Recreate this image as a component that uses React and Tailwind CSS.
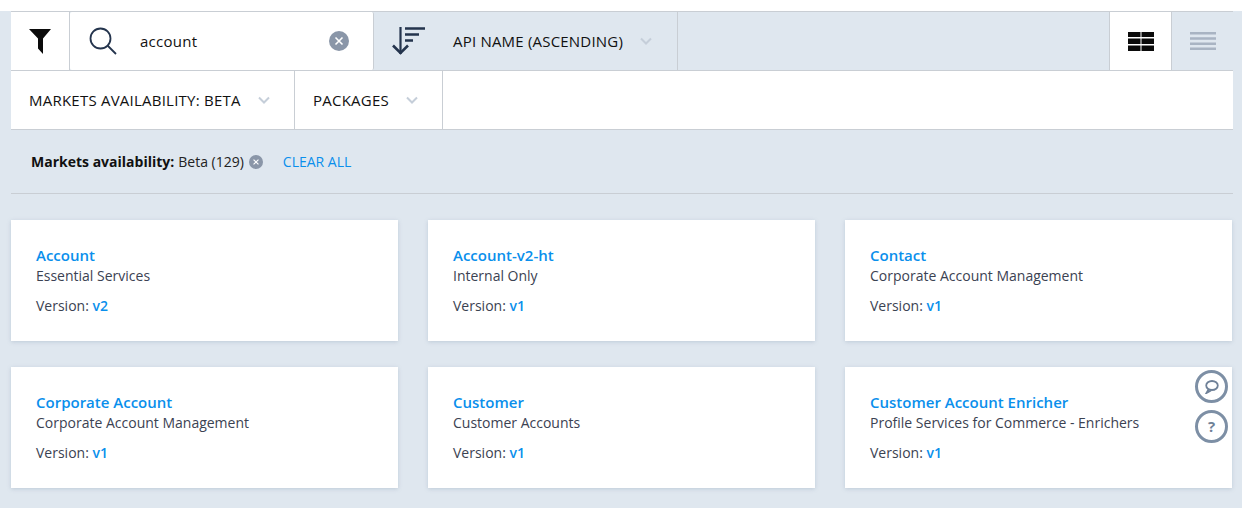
import React from "react";

const cards = [
  { name: "Account", group: "Essential Services", version: "v2" },
  { name: "Account-v2-ht", group: "Internal Only", version: "v1" },
  { name: "Contact", group: "Corporate Account Management", version: "v1" },
  { name: "Corporate Account", group: "Corporate Account Management", version: "v1" },
  { name: "Customer", group: "Customer Accounts", version: "v1" },
  { name: "Customer Account Enricher", group: "Profile Services for Commerce - Enrichers", version: "v1" },
];

const Chevron = () => (
  <svg width="12" height="8" viewBox="0 0 12 8" fill="none" stroke="#c5ced9" strokeWidth="2">
    <path d="M1 1.5l5 5 5-5" />
  </svg>
);

const ClearIcon = ({ size }) => (
  <svg width={size} height={size} viewBox="0 0 20 20">
    <circle cx="10" cy="10" r="10" fill="#8a96a8" />
    <path d="M6.5 6.5l7 7M13.5 6.5l-7 7" stroke="#fff" strokeWidth="1.6" />
  </svg>
);

const App = () => {
  return (
    <div className="relative h-[508px] overflow-hidden bg-[#dfe7ef] font-['Open_Sans',sans-serif] text-[14px] text-[#111]">
      <div className="h-[11px] bg-white" />

      <div className="mx-[11px] w-[1222px]">
        {/* Top toolbar */}
        <div className="flex h-[60px] border-y border-[#c9ced4]">
          <div className="flex w-[59px] items-center justify-center border-r border-[#c9ced4] bg-white">
            <svg width="22" height="25" viewBox="0 0 22 25">
              <path d="M0 0h22l-8 9.5V25l-5-5.5V9.5z" fill="#0b0b0b" />
            </svg>
          </div>
          <div className="flex w-[304px] items-center rounded-[2px] border-r border-[#c9ced4] bg-white">
            <svg className="ml-[19px]" width="28" height="28" viewBox="0 0 28 28" fill="none" stroke="#24344d" strokeWidth="1.8">
              <circle cx="11.5" cy="11.5" r="10" />
              <path d="M18.5 18.5l8.5 8.5" />
            </svg>
            <span className="ml-[23px] flex-1 text-[15px] font-medium tracking-[0.25px]">account</span>
            <span className="mr-[24px] flex">
              <ClearIcon size={20} />
            </span>
          </div>
          <div className="flex w-[304px] items-center border-r border-[#c9ced4]">
            <svg className="ml-[18px]" width="34" height="30" viewBox="0 0 34 30" fill="none" stroke="#24344d">
              <path d="M8.500 1v27" strokeWidth="2.200" />
              <path d="M1 19.500l7.500 7.500 7.500-7.500" strokeWidth="2.600" />
              <path d="M13 2.500h20M13 8.500h14M13 14.500h8" strokeWidth="2.600" />
            </svg>
            <span className="ml-[27px] text-[15px] font-medium tracking-[0.2px]">API NAME (ASCENDING)</span>
            <span className="ml-[17px] flex">
              <Chevron />
            </span>
          </div>
          <div className="flex-1" />
          <div className="flex w-[63px] items-center justify-center border-x border-[#c9ced4] bg-white">
            <svg width="26" height="19" viewBox="0 0 26 19" fill="#0b0b0b">
              <path d="M0 0h12.500v5H0zM13.500 0H26v5H13.500zM0 6.500h12.500v5.500H0zM13.500 6.500H26v5.500H13.500zM0 13.500h12.500V19H0zM13.500 13.500H26V19H13.500z" />
            </svg>
          </div>
          <div className="flex w-[61px] items-center justify-center">
            <svg width="26" height="19" viewBox="0 0 26 19" fill="#a9b4c3">
              <path d="M0 0h26v2.500H0zM0 5.200h26v2.500H0zM0 10.400h26v2.500H0zM0 15.600h26v2.500H0z" />
            </svg>
          </div>
        </div>

        {/* Filter dropdowns */}
        <div className="flex h-[59px] border-b border-[#c9ced4] bg-white text-[15px] font-medium tracking-[0.23px]">
          <div className="flex w-[284px] items-center border-r border-[#c9ced4] pl-[18px]">
            <span>MARKETS AVAILABILITY: BETA</span>
            <span className="ml-[17px] flex">
              <Chevron />
            </span>
          </div>
          <div className="flex w-[148px] items-center border-r border-[#c9ced4] pl-[18px]">
            <span>PACKAGES</span>
            <span className="ml-[17px] flex">
              <Chevron />
            </span>
          </div>
        </div>

        {/* Active filters */}
        <div className="flex h-[64px] items-center border-b border-[#c9ced4] pl-[20px] text-[14px]">
          <span className="font-bold">Markets availability:</span>
          <span className="ml-[4px] text-[#222]">Beta (129)</span>
          <span className="ml-[5px] flex">
            <ClearIcon size={14} />
          </span>
          <span className="ml-[20px] text-[#0a8fec]">CLEAR ALL</span>
        </div>

        {/* API cards */}
        <div className="mt-[26px] grid w-[1221px] grid-cols-[387px_387px_387px] gap-x-[30px] gap-y-[26px]">
          {cards.map((card) => (
            <div key={card.name} className="h-[121px] bg-white pl-[25px] pt-[25px] shadow-[0_1px_4px_rgba(120,140,165,0.3)]">
              <div className="text-[15px] leading-[20px] font-semibold text-[#0a8fec]">{card.name}</div>
              <div className="text-[14px] leading-[21px] text-[#3b4252]">{card.group}</div>
              <div className="mt-[9px] text-[14px] leading-[21px] text-[#3b4252]">
                Version: <span className="font-semibold text-[#0a8fec]">{card.version}</span>
              </div>
            </div>
          ))}
        </div>
      </div>

      {/* Floating help buttons */}
      <div className="absolute left-[1195px] top-[370px] flex flex-col gap-[7px]">
        <div className="flex h-[33px] w-[33px] items-center justify-center rounded-full border-[3px] border-[#7d8fa5] bg-white/40">
          <svg width="15" height="14" viewBox="0 0 15 14" fill="none" stroke="#6f8198" strokeWidth="1.800">
            <ellipse cx="8" cy="5.500" rx="5.800" ry="4.500" />
            <path d="M4.500 9.500l-2 3.500 4.500-2.500" />
          </svg>
        </div>
        <div className="flex h-[33px] w-[33px] items-center justify-center rounded-full border-[3px] border-[#7d8fa5] bg-white/40 text-[15px] font-bold text-[#6f8198]">
          ?
        </div>
      </div>
    </div>
  );
};

export default App;
